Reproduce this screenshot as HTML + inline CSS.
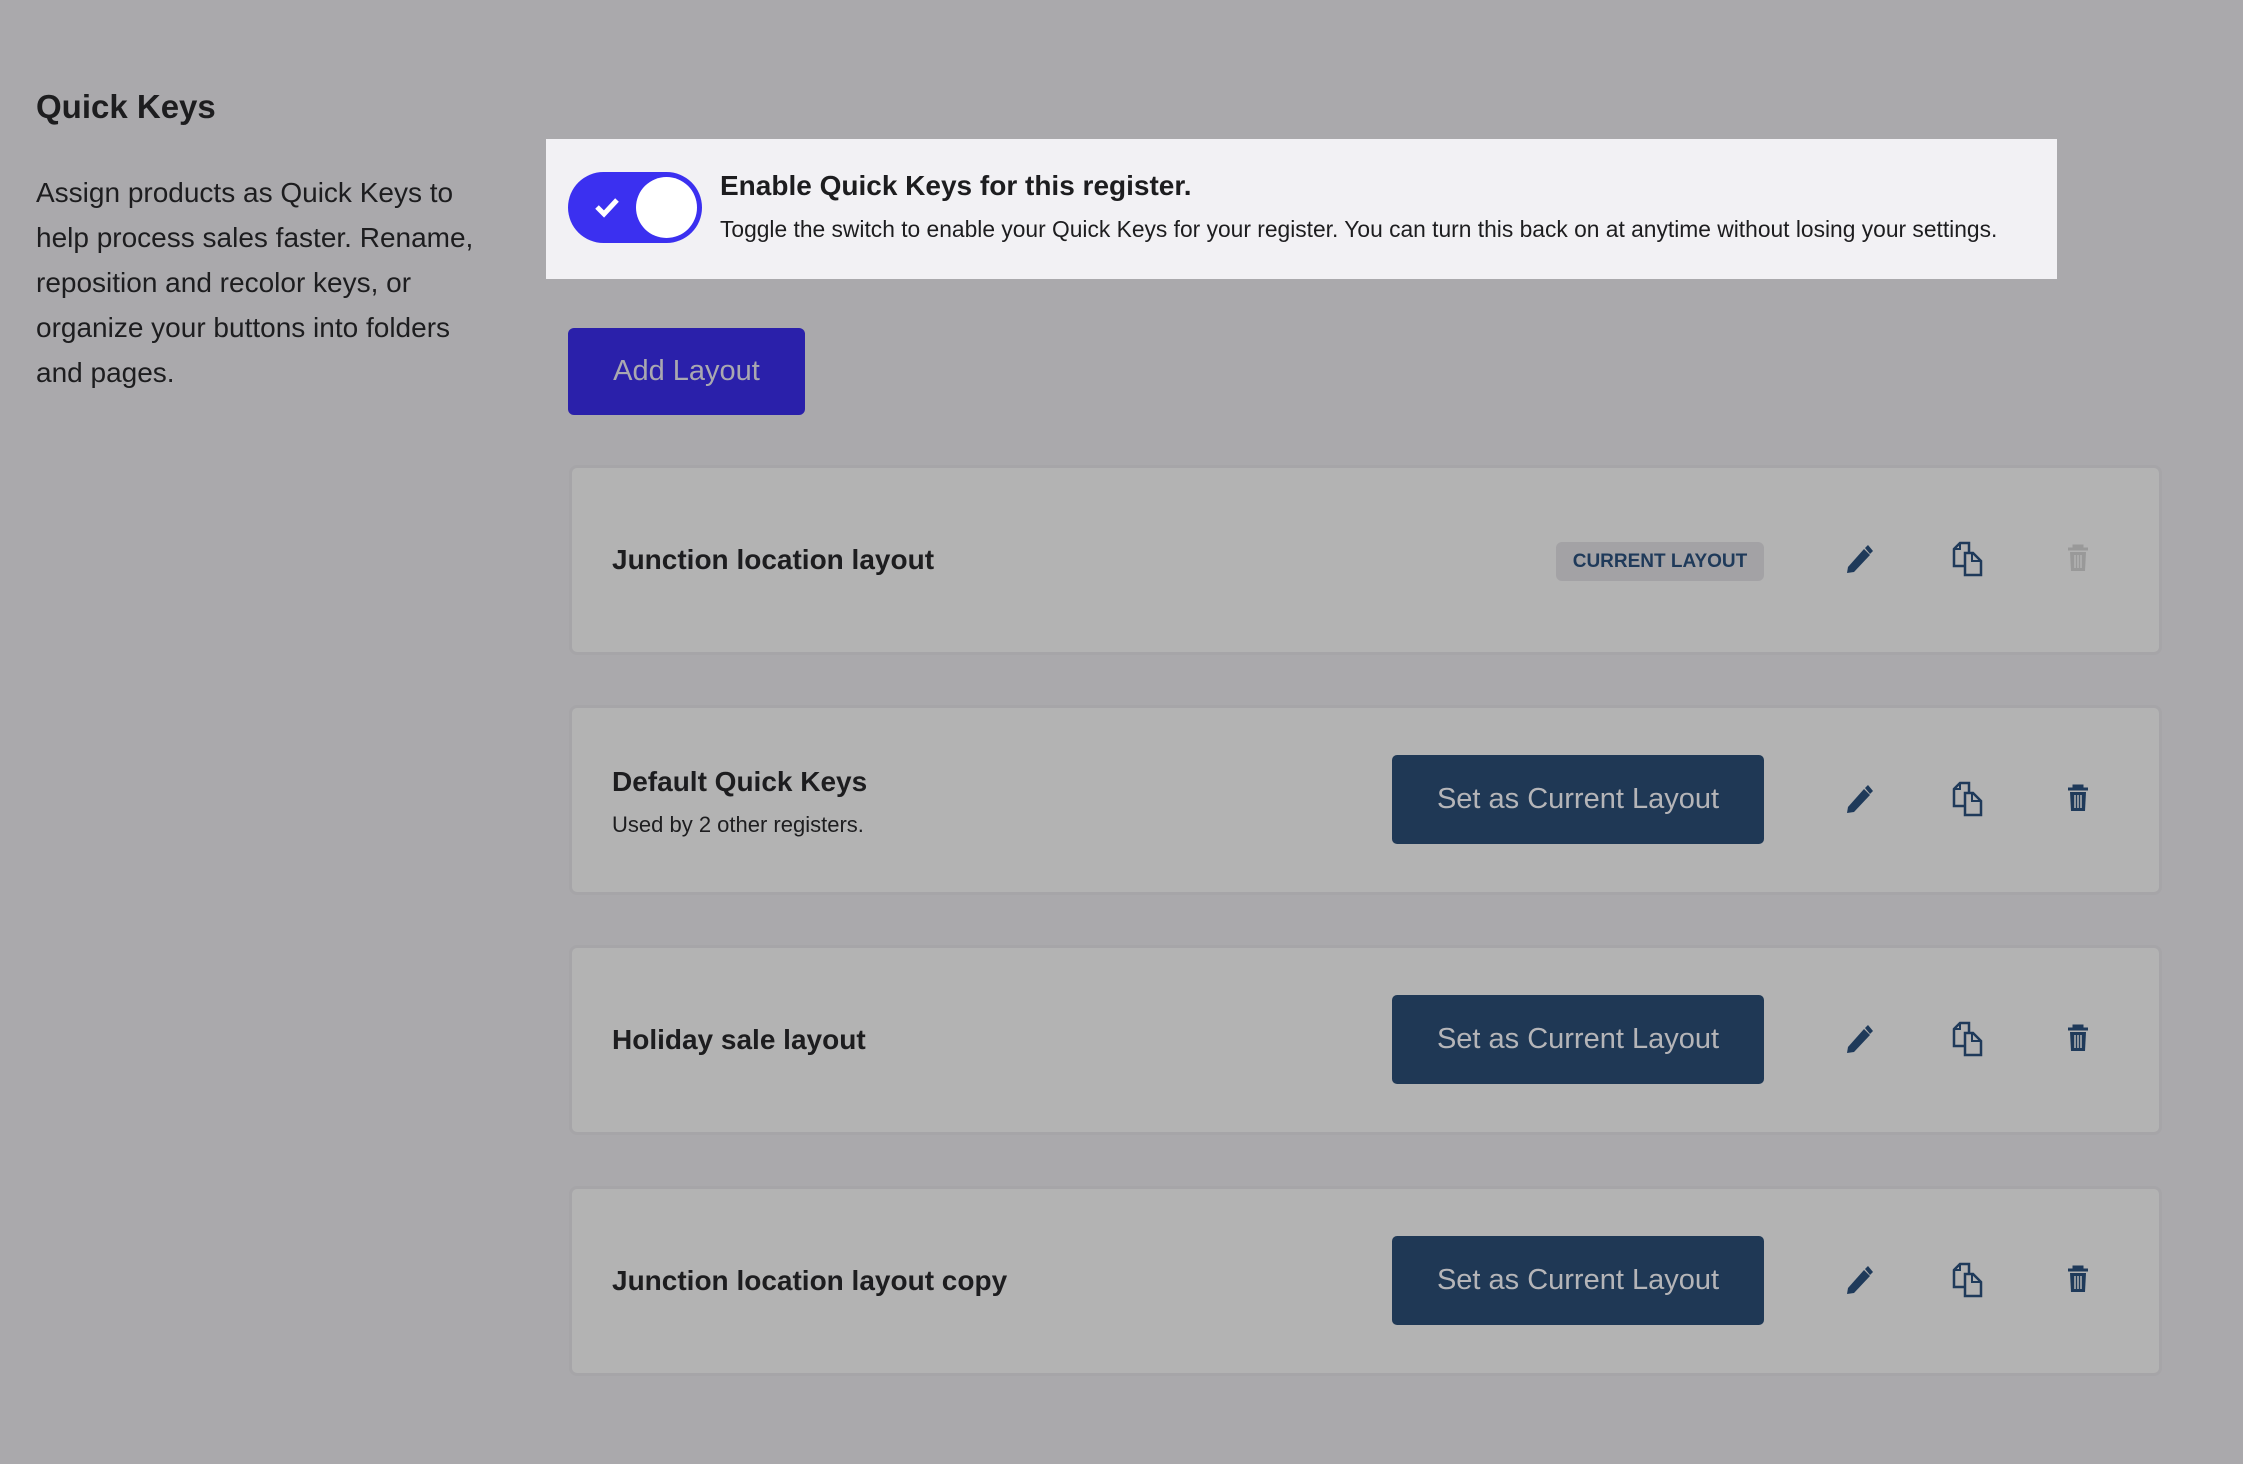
<!DOCTYPE html>
<html><head><meta charset="utf-8"><style>
*{margin:0;padding:0;box-sizing:border-box}
body{width:2243px;height:1464px;background:#aaa9ac;font-family:"Liberation Sans",sans-serif;position:relative;overflow:hidden;color:#1d1d1f}
.abs{position:absolute}
h1{position:absolute;left:36px;top:88px;font-size:33px;font-weight:bold;color:#1d1d1f}
.desc{position:absolute;left:36px;top:170px;font-size:28px;line-height:45px;color:#1d1d1f;white-space:nowrap}
.banner{left:546px;top:139px;width:1511px;height:140px;background:#f2f1f4}
.toggle{left:568px;top:172px;width:134px;height:71px;border-radius:36px;background:#3b30f0}
.knob{position:absolute;right:5px;top:5px;width:61px;height:61px;border-radius:50%;background:#fff}
.bt{left:720px;top:170px;font-size:28px;font-weight:bold;color:#1d1d1f;white-space:nowrap}
.bs{left:720px;top:216px;font-size:22.8px;color:#1d1d1f;white-space:nowrap}
.add{left:568px;top:328px;width:237px;height:87px;background:#2a20aa;border-radius:6px;color:#a9a8b0;font-size:29px;display:flex;align-items:center;justify-content:center}
.card{left:569px;width:1593px;height:190px;background:#b3b3b3;border:3px solid #a6a5a8;border-radius:8px}
.ct{position:absolute;left:40px;font-size:28px;font-weight:bold;color:#1d1d1f;white-space:nowrap}
.cs{position:absolute;left:40px;font-size:22px;color:#1d1d1f}
.set{position:absolute;left:820px;top:47px;width:372px;height:89px;background:#1f3855;border-radius:5px;color:#b5b5b8;font-size:29px;display:flex;align-items:center;justify-content:center}
.badge{position:absolute;left:984px;top:74px;width:208px;height:39px;background:#a3a2a5;border-radius:6px;color:#1f3a5a;font-size:19px;font-weight:bold;display:flex;align-items:center;justify-content:center}
.ic{position:absolute;top:76px}
</style></head><body>
<h1>Quick Keys</h1>
<div class="desc">Assign products as Quick Keys to<br>help process sales faster. Rename,<br>reposition and recolor keys, or<br>organize your buttons into folders<br>and pages.</div>
<div class="abs banner"></div>
<div class="abs toggle"><svg class="abs" style="left:26px;top:23px" width="26" height="24" viewBox="0 0 26 24"><path d="M3 12 L10 19 L23 5" stroke="#fff" stroke-width="5" fill="none"/></svg><div class="knob"></div></div>
<div class="abs bt">Enable Quick Keys for this register.</div>
<div class="abs bs">Toggle the switch to enable your Quick Keys for your register. You can turn this back on at anytime without losing your settings.</div>
<div class="abs add">Add Layout</div>

<div class="abs card" style="top:465px">
<div class="ct" style="top:76px">Junction location layout</div>
<div class="badge">CURRENT LAYOUT</div>
<svg class="ic" style="left:1273px" width="28" height="30" viewBox="0 0 28 30"><path d="M3 23 L19 5 L25 11 L9 28 L2 29 Z" fill="#1f3a5a"/><path d="M20 4 L23 1 L28 7 L25 10Z" fill="#1f3a5a"/></svg>
<svg class="ic" style="left:1380px;top:73px" width="32" height="36" viewBox="0 0 32 36"><path d="M13 25 H2 V8 L8 2 H17 V11" stroke="#1f3a5a" stroke-width="2.5" fill="none"/><path d="M13 12 H21 L29 20 V34 H13 Z" stroke="#1f3a5a" stroke-width="2.5" fill="none"/><path d="M20 12 V20 H29" stroke="#1f3a5a" stroke-width="2" fill="none"/><path d="M8 2 V8 H2" stroke="#1f3a5a" stroke-width="2" fill="none"/></svg>
<svg class="ic" style="left:1495px" width="22" height="28" viewBox="0 0 22 28"><path d="M1 5 H21 M7 5 V2 H15 V5" stroke="#999" stroke-width="3" fill="none"/><path d="M3 8 H19 L18 27 H4 Z" fill="#999"/><path d="M8 11 V24 M11 11 V24 M14 11 V24" stroke="#b3b3b3" stroke-width="1.5"/></svg>
</div>

<div class="abs card" style="top:705px">
<div class="ct" style="top:58px">Default Quick Keys</div>
<div class="cs" style="top:104px">Used by 2 other registers.</div>
<div class="set">Set as Current Layout</div>
<svg class="ic" style="left:1273px" width="28" height="30" viewBox="0 0 28 30"><path d="M3 23 L19 5 L25 11 L9 28 L2 29 Z" fill="#1f3a5a"/><path d="M20 4 L23 1 L28 7 L25 10Z" fill="#1f3a5a"/></svg>
<svg class="ic" style="left:1380px;top:73px" width="32" height="36" viewBox="0 0 32 36"><path d="M13 25 H2 V8 L8 2 H17 V11" stroke="#1f3a5a" stroke-width="2.5" fill="none"/><path d="M13 12 H21 L29 20 V34 H13 Z" stroke="#1f3a5a" stroke-width="2.5" fill="none"/><path d="M20 12 V20 H29" stroke="#1f3a5a" stroke-width="2" fill="none"/><path d="M8 2 V8 H2" stroke="#1f3a5a" stroke-width="2" fill="none"/></svg>
<svg class="ic" style="left:1495px" width="22" height="28" viewBox="0 0 22 28"><path d="M1 5 H21 M7 5 V2 H15 V5" stroke="#1f3a5a" stroke-width="3" fill="none"/><path d="M3 8 H19 L18 27 H4 Z" fill="#1f3a5a"/><path d="M8 11 V24 M11 11 V24 M14 11 V24" stroke="#b3b3b3" stroke-width="1.5"/></svg>
</div>

<div class="abs card" style="top:945px">
<div class="ct" style="top:76px">Holiday sale layout</div>
<div class="set">Set as Current Layout</div>
<svg class="ic" style="left:1273px" width="28" height="30" viewBox="0 0 28 30"><path d="M3 23 L19 5 L25 11 L9 28 L2 29 Z" fill="#1f3a5a"/><path d="M20 4 L23 1 L28 7 L25 10Z" fill="#1f3a5a"/></svg>
<svg class="ic" style="left:1380px;top:73px" width="32" height="36" viewBox="0 0 32 36"><path d="M13 25 H2 V8 L8 2 H17 V11" stroke="#1f3a5a" stroke-width="2.5" fill="none"/><path d="M13 12 H21 L29 20 V34 H13 Z" stroke="#1f3a5a" stroke-width="2.5" fill="none"/><path d="M20 12 V20 H29" stroke="#1f3a5a" stroke-width="2" fill="none"/><path d="M8 2 V8 H2" stroke="#1f3a5a" stroke-width="2" fill="none"/></svg>
<svg class="ic" style="left:1495px" width="22" height="28" viewBox="0 0 22 28"><path d="M1 5 H21 M7 5 V2 H15 V5" stroke="#1f3a5a" stroke-width="3" fill="none"/><path d="M3 8 H19 L18 27 H4 Z" fill="#1f3a5a"/><path d="M8 11 V24 M11 11 V24 M14 11 V24" stroke="#b3b3b3" stroke-width="1.5"/></svg>
</div>

<div class="abs card" style="top:1186px">
<div class="ct" style="top:76px">Junction location layout copy</div>
<div class="set">Set as Current Layout</div>
<svg class="ic" style="left:1273px" width="28" height="30" viewBox="0 0 28 30"><path d="M3 23 L19 5 L25 11 L9 28 L2 29 Z" fill="#1f3a5a"/><path d="M20 4 L23 1 L28 7 L25 10Z" fill="#1f3a5a"/></svg>
<svg class="ic" style="left:1380px;top:73px" width="32" height="36" viewBox="0 0 32 36"><path d="M13 25 H2 V8 L8 2 H17 V11" stroke="#1f3a5a" stroke-width="2.5" fill="none"/><path d="M13 12 H21 L29 20 V34 H13 Z" stroke="#1f3a5a" stroke-width="2.5" fill="none"/><path d="M20 12 V20 H29" stroke="#1f3a5a" stroke-width="2" fill="none"/><path d="M8 2 V8 H2" stroke="#1f3a5a" stroke-width="2" fill="none"/></svg>
<svg class="ic" style="left:1495px" width="22" height="28" viewBox="0 0 22 28"><path d="M1 5 H21 M7 5 V2 H15 V5" stroke="#1f3a5a" stroke-width="3" fill="none"/><path d="M3 8 H19 L18 27 H4 Z" fill="#1f3a5a"/><path d="M8 11 V24 M11 11 V24 M14 11 V24" stroke="#b3b3b3" stroke-width="1.5"/></svg>
</div>
</body></html>
